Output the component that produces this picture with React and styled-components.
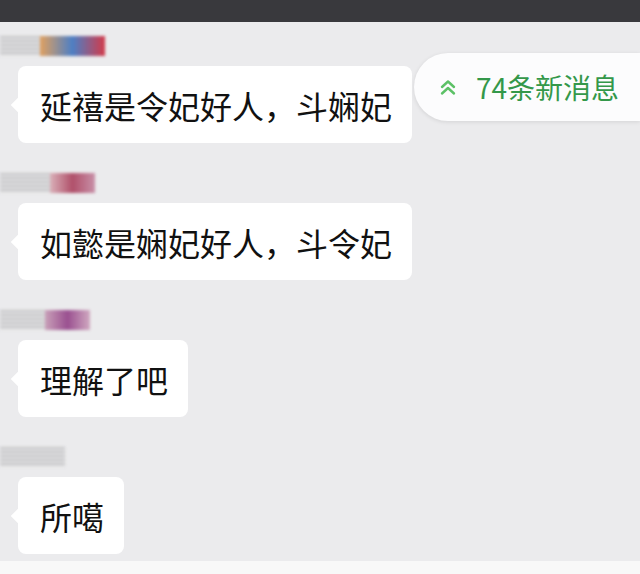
import styled, { createGlobalStyle } from "styled-components";

const GlobalStyle = createGlobalStyle`
  html, body {
    margin: 0;
    padding: 0;
    background: #ebebed;
  }
  * {
    box-sizing: border-box;
  }
`;

const messages = [
  {
    text: "延禧是令妃好人，斗娴妃",
    name: { width: 105, gray: 40, colors: ["#e0a060", "#4d7fc4", "#d23a4a"] },
  },
  {
    text: "如懿是娴妃好人，斗令妃",
    name: { width: 95, gray: 50, colors: ["#d9b0b8", "#b0506a", "#c890a8"] },
  },
  {
    text: "理解了吧",
    name: { width: 90, gray: 45, colors: ["#c8a0b8", "#9a5090", "#d0a8c0"] },
  },
  {
    text: "所噶",
    name: { width: 65, gray: 65, colors: [] },
  },
];

function App() {
  return (
    <Page>
      <GlobalStyle />
      <TopBar />
      <Chat>
        {messages.map((m, i) => (
          <Group key={i}>
            <Name $width={m.name.width}>
              <Streaks $width={m.name.gray} />
              {m.name.colors.length > 0 && <Color $colors={m.name.colors} />}
            </Name>
            <Bubble>{m.text}</Bubble>
          </Group>
        ))}
        <NewPill>
          <svg width="18" height="18" viewBox="0 0 18 18" fill="none">
            <path
              d="M3 9 L9 3.5 L15 9 M3 15.5 L9 10 L15 15.5"
              stroke="#5cc166"
              strokeWidth="2.4"
              strokeLinecap="round"
              strokeLinejoin="round"
            />
          </svg>
          <span>74条新消息</span>
        </NewPill>
      </Chat>
      <BottomBar />
    </Page>
  );
}

export default App;

const Page = styled.div`
  width: 640px;
  height: 574px;
  display: flex;
  flex-direction: column;
  overflow: hidden;
  font-family: "Noto Sans CJK SC", "Noto Sans", sans-serif;
`;

const TopBar = styled.div`
  height: 22px;
  background: #39393d;
  flex-shrink: 0;
`;

const Chat = styled.div`
  flex: 1;
  position: relative;
  display: flex;
  flex-direction: column;
  gap: 30px;
  padding: 14px 0 0 18px;
  background: #ebebed;
`;

const BottomBar = styled.div`
  height: 13px;
  background: #f8f8f8;
  flex-shrink: 0;
`;

const Group = styled.div`
  display: flex;
  flex-direction: column;
  align-items: flex-start;
  gap: 10px;
`;

const Name = styled.div`
  margin-left: -18px;
  width: ${(p) => p.$width}px;
  height: 20px;
  display: flex;
  filter: blur(1.6px);
`;

const Streaks = styled.div`
  width: ${(p) => p.$width}px;
  height: 100%;
  background: repeating-linear-gradient(
    180deg,
    #c4c4c6 0 2px,
    #e2e2e4 2px 4px
  );
`;

const Color = styled.div`
  flex: 1;
  height: 100%;
  background: linear-gradient(
    90deg,
    ${(p) => p.$colors.join(", ")}
  );
`;

const Bubble = styled.div`
  position: relative;
  height: 77px;
  display: flex;
  align-items: center;
  padding: 0 20px 0 22px;
  background: #ffffff;
  border-radius: 8px;
  font-size: 32px;
  color: #111111;
  white-space: nowrap;

  &::before {
    content: "";
    position: absolute;
    left: -5px;
    top: 50%;
    width: 11px;
    height: 11px;
    background: #ffffff;
    transform: translateY(-50%) rotate(45deg);
  }
`;

const NewPill = styled.div`
  position: absolute;
  top: 31px;
  left: 414px;
  right: 0;
  height: 68px;
  display: flex;
  align-items: center;
  gap: 19px;
  padding-left: 25px;
  background: #fcfcfd;
  border-radius: 34px 0 0 34px;
  box-shadow: 0 1px 4px rgba(0, 0, 0, 0.1);

  span {
    font-size: 28px;
    color: #34984a;
  }
`;
